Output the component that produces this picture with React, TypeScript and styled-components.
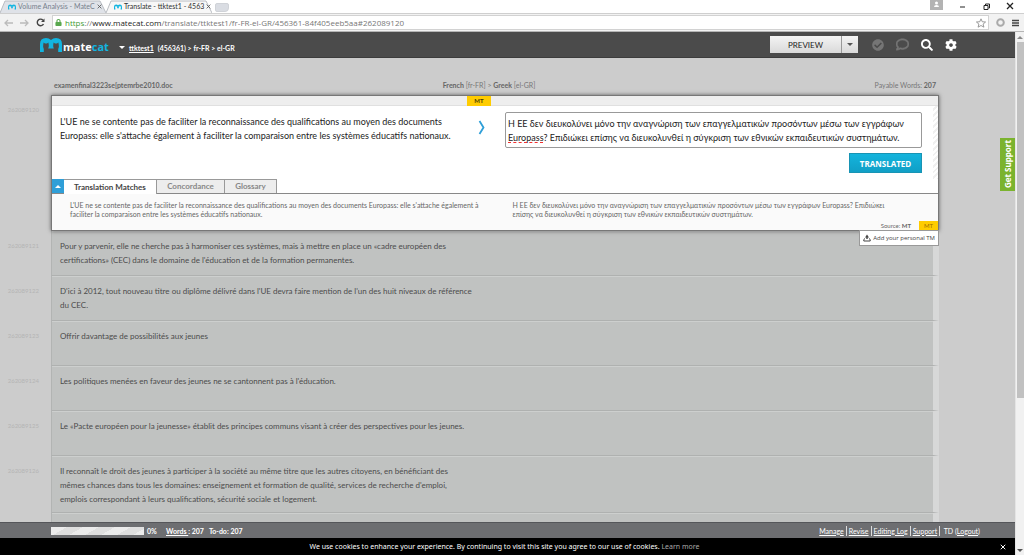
import React from "react";
import styled, { createGlobalStyle } from "styled-components";
import { FaCheckCircle, FaRegComment, FaSearch, FaCog, FaLock } from "react-icons/fa";

const GlobalStyle = createGlobalStyle`
  * { box-sizing: border-box; }
  body { margin: 0; background: #cccccc; font-family: "Lato", "Open Sans", sans-serif; color: #333; }
  button, input, textarea { font: inherit; margin: 0; border-radius: 0; }
  button { cursor: pointer; padding: 0; border: 0; background: none; color: inherit; }
  a { color: inherit; }
`;

const Shell = styled.div`
  display: flex;
  flex-direction: column;
  min-height: 100vh;
`;

/* ---------- browser chrome ---------- */

const TabStrip = styled.div`
  display: flex;
  height: 13px;
  background: #fff;
`;

const BrowserTab = styled.div<{ $active?: boolean }>`
  position: relative;
  display: flex;
  align-items: center;
  gap: 2px;
  width: 106px;
  padding: 0 4px 0 8px;
  font-size: 7px;
  line-height: 13px;
  color: ${(p) => (p.$active ? "#333" : "#777f8c")};
`;

const TabShape = styled.svg`
  position: absolute;
  inset: 0;
  width: 100%;
  height: 100%;
`;

const TabTitle = styled.span`
  position: relative;
  flex: 1;
  white-space: nowrap;
`;

const TabMark = styled.svg`
  position: relative;
  flex: none;
  width: 8px;
  height: 6px;
`;

const TabClose = styled.button`
  position: relative;
  display: flex;
  color: #555;
`;

const NewTab = styled.button`
  width: 14px;
  height: 9px;
  margin: 3px 0 0 3px;
  border: 1px solid #d0d3d8;
  background: #dadde3;
  border-radius: 2px 2px 4px 2px;
`;

const WindowButtons = styled.div`
  display: flex;
  align-items: center;
  gap: 15px;
  margin-left: auto;
  padding-right: 9px;
`;

const WindowButton = styled.button`
  display: flex;
  width: 9px;
  height: 9px;
  color: #222;
`;

const UserBadge = styled(WindowButton)`
  width: 13px;
  height: 10px;
  align-self: flex-start;
  justify-content: center;
  background: #b3b3b3;
  color: #fff;
`;

const AddressBar = styled.div`
  display: flex;
  align-items: center;
  gap: 7px;
  height: 19px;
  padding: 0 4px;
  border-top: 1px solid #cfcfcf;
  border-bottom: 1px solid #b5b5b5;
  background: #f2f2f2;
`;

const ChromeButton = styled.button`
  display: flex;
  color: #444;
  &:disabled { color: #bbb; }
`;

const UrlField = styled.div`
  display: flex;
  flex: 1;
  align-items: center;
  gap: 3px;
  height: 15px;
  padding: 0 2px;
  border: 1px solid #d2d2d2;
  background: #fff;
  font-family: "Open Sans", sans-serif;
  font-size: 8px;
  line-height: 13px;
  color: #777;
  b { font-weight: 400; color: #222; }
  i { font-style: normal; color: #3f9c35; }
`;

const UrlText = styled.a`
  flex: 1;
  text-decoration: none;
`;

/* ---------- page frame ---------- */

const Viewport = styled.div`
  display: flex;
  flex: 1;
`;

const Page = styled.div`
  position: relative;
  display: flex;
  flex: 1;
  flex-direction: column;
  min-width: 0;
  background: #cccccc;
`;

const Scrollbar = styled.div`
  display: flex;
  flex-direction: column;
  justify-content: space-between;
  align-items: center;
  width: 9px;
  padding: 4px 0 3px;
  border-left: 1px solid #e4e4e4;
  background: #f1f1f1;
`;

const Thumb = styled.div`
  flex: 0 0 69%;
  width: 7px;
  margin: 3px 0 auto;
  background: #c1c1c1;
`;

const Header = styled.header`
  display: flex;
  align-items: center;
  height: 26px;
  padding: 0 58px 0 40px;
  border-bottom: 1px solid #3c3c3c;
  background: #4b4b4b;
  color: #fff;
`;

const Logo = styled.a`
  display: flex;
  align-items: center;
  gap: 1px;
  height: 24px;
  color: #fff;
  font-family: "Open Sans", sans-serif;
  font-size: 11px;
  font-weight: 700;
  line-height: 16px;
  text-decoration: none;
  em { font-style: normal; color: #12b5e0; }
`;

const LogoText = styled.span`
  width: 48px;
  padding-top: 5px;
`;

const Crumbs = styled.nav`
  display: flex;
  align-items: center;
  gap: 4px;
  padding: 6px 0 0 8px;
  font-size: 7px;
  font-weight: 700;
  line-height: 10px;
  white-space: nowrap;
`;

const Caret = styled.span<{ $color: string; $up?: boolean }>`
  border: 3px solid transparent;
  border-top: ${(p) => (p.$up ? "0" : `3px solid ${p.$color}`)};
  border-bottom: ${(p) => (p.$up ? `3px solid ${p.$color}` : "0")};
`;

const HeaderTools = styled.div`
  display: flex;
  align-items: center;
  gap: 12px;
  margin-left: auto;
`;

const SplitButton = styled.div`
  display: flex;
  height: 17px;
  margin-right: 2px;
`;

const PreviewButton = styled.button`
  display: flex;
  align-items: center;
  justify-content: center;
  width: 71px;
  background: linear-gradient(#f4f4f4, #d9d9d9);
  color: #222;
  font-size: 8px;
`;

const PreviewMenu = styled(PreviewButton)`
  width: 17px;
  border-left: 1px solid #999;
`;

const ToolButton = styled.button<{ $dim?: boolean }>`
  display: flex;
  color: ${(p) => (p.$dim ? "#757575" : "#fff")};
`;

/* ---------- editor ---------- */

const Main = styled.main`
  display: flex;
  flex: 1;
  flex-direction: column;
`;

const FileBar = styled.div`
  display: grid;
  grid-template-columns: 1fr auto 1fr;
  padding: 22px 79px 5px 54px;
  color: #777;
  font-size: 7px;
  line-height: 10px;
  b { color: #666; }
`;

const Languages = styled.span`
  padding-right: 12px;
`;

const Payable = styled.span`
  text-align: right;
`;

const SegmentRow = styled.section<{ $last?: boolean }>`
  display: flex;
  flex: ${(p) => (p.$last ? "1" : "none")};
  padding: 0 76px 0 ${(p) => (p.$last ? "51px" : "0")};
`;

const SegmentId = styled.span`
  width: 51px;
  padding: 10px 12px 0 0;
  color: #b4b4b4;
  font-size: 6px;
  line-height: 10px;
  text-align: right;
`;

const SegmentBody = styled.div`
  flex: 1;
  min-height: 45px;
  padding: 8px 8px 6px;
  border-right: 6px solid #d7d8d8;
  border-left: 1px solid #b2b4b3;
  border-bottom: 1px solid #afb1b0;
  background: #c0c2c1;
  box-shadow: inset 0 1px #cdcfce;
  color: #4c4c4c;
  font-size: 8px;
  line-height: 14px;
  white-space: pre-line;
`;

const LastBody = styled(SegmentBody)`
  min-height: 8px;
  padding: 0;
  border-bottom: 0;
`;

const Panel = styled.div`
  position: relative;
  z-index: 1;
  flex: 1;
  min-width: 0;
  border: 1px solid #777;
  background: #fff;
  box-shadow: 0 0 4px rgba(0, 0, 0, 0.55);
`;

const PanelTop = styled.div`
  display: flex;
  justify-content: center;
  height: 10px;
  padding-right: 32px;
  border-bottom: 1px solid #e0e0e0;
  background: #eee;
`;

const MtBadge = styled.span<{ $small?: boolean }>`
  width: ${(p) => (p.$small ? "19px" : "24px")};
  height: ${(p) => (p.$small ? "9px" : "10px")};
  background: #ffcc00;
  color: ${(p) => (p.$small ? "#a06e00" : "#4a3b00")};
  font-size: 6px;
  font-weight: ${(p) => (p.$small ? "400" : "700")};
  line-height: ${(p) => (p.$small ? "9px" : "10px")};
  text-align: center;
`;

const EditArea = styled.div`
  display: grid;
  grid-template-columns: 413fr 34px 423fr 16px;
  height: 73px;
`;

const Source = styled.div`
  padding: 9px 0 0 8px;
  color: #222;
  font-size: 9px;
  line-height: 14px;
  white-space: pre-line;
`;

const CopyButton = styled.button`
  display: flex;
  align-self: start;
  justify-content: center;
  padding-top: 14px;
`;

const Target = styled.div`
  position: relative;
  display: flex;
  flex-direction: column;
  align-items: flex-end;
  gap: 5px;
  padding: 6px 0 0 6px;
`;

const TargetText = styled.textarea`
  display: block;
  width: 100%;
  height: 36px;
  padding: 4px 2px 2px;
  border: 1px solid #999;
  border-radius: 2px;
  overflow: hidden;
  resize: none;
  outline: none;
  background: #fff;
  color: #222;
  font-size: 9px;
  line-height: 14px;
`;

const Squiggle = styled.span`
  position: absolute;
  top: 36px;
  left: 9px;
  width: 35px;
  border-bottom: 1px dashed #f03030;
`;

const TranslatedButton = styled.button`
  width: 73px;
  height: 20px;
  border: 1px solid #1894b4;
  background: linear-gradient(#14b4dd, #109fc6);
  color: #fff;
  font-family: "Open Sans", sans-serif;
  font-size: 8px;
  font-weight: 700;
`;

const Hatch = styled.div`
  justify-self: end;
  width: 5px;
  background: repeating-linear-gradient(135deg, #fff 0 2px, #f0f0f0 2px 4px);
`;

const Tabs = styled.div`
  display: flex;
  height: 15px;
  border-bottom: 1px solid #888;
`;

const ToggleButton = styled.button`
  display: flex;
  align-items: center;
  justify-content: center;
  width: 12px;
  height: 14px;
  background: #2f9fd8;
`;

const TabButton = styled.button<{ $active?: boolean; $width: number }>`
  width: ${(p) => p.$width}px;
  height: ${(p) => (p.$active ? "15px" : "14px")};
  border-top: 1px solid #999;
  border-right: 1px solid #999;
  background: ${(p) => (p.$active ? "#fff" : "#ededed")};
  color: ${(p) => (p.$active ? "#444" : "#888")};
  font-size: 8px;
  font-weight: 700;
  line-height: 13px;
`;

const Matches = styled.div`
  display: grid;
  grid-template-columns: 443fr 426fr;
  padding: 7px 0 0 18px;
  background: #fafafa;
  color: #666;
  font-size: 7px;
  line-height: 9px;
  white-space: pre-line;
`;

const MatchMeta = styled.div`
  display: flex;
  justify-content: flex-end;
  gap: 8px;
  height: 11px;
  padding-top: 2px;
  background: #fafafa;
  color: #666;
  font-size: 6px;
  line-height: 9px;
`;

const AddTm = styled.button`
  position: absolute;
  top: 100%;
  right: -1px;
  display: flex;
  align-items: center;
  gap: 2px;
  height: 16px;
  padding: 0 3px;
  border: 1px solid #999;
  background: #fff;
  color: #444;
  font-family: "Open Sans", sans-serif;
  font-size: 6px;
  white-space: nowrap;
`;

const SupportTab = styled.button`
  position: absolute;
  top: 106px;
  right: 0;
  z-index: 2;
  width: 15px;
  height: 53px;
  background: #7bb32e;
  color: #fff;
  font-family: "Open Sans", sans-serif;
  font-size: 8px;
  font-weight: 700;
  line-height: 15px;
  text-align: center;
  writing-mode: vertical-rl;
  transform: rotate(180deg);
`;

/* ---------- footer ---------- */

const StatusBar = styled.footer`
  display: flex;
  align-items: center;
  gap: 5px;
  height: 16px;
  padding: 0 33px 0 51px;
  border-top: 1px solid #55565a;
  background: #6d6e71;
  color: #fff;
  font-size: 7px;
  font-weight: 700;
  line-height: 10px;
`;

const Progress = styled.div`
  width: 93px;
  height: 8px;
  background: repeating-linear-gradient(150deg, #ececec 0 8px, #dfdfdf 8px 16px);
`;

const Percent = styled.span`
  width: 14px;
  margin-left: -2px;
`;

const FooterLinks = styled.nav`
  display: flex;
  margin-left: auto;
`;

const FooterItem = styled.span<{ $last?: boolean }>`
  padding: 0 2px;
  border-right: ${(p) => (p.$last ? "0" : "1px solid #ddd")};
  font-weight: 400;
`;

const CookieBar = styled.div`
  display: flex;
  align-items: center;
  height: 17px;
  padding: 0 9px;
  background: #000;
  color: #fff;
  font-family: "Noto Sans", "Liberation Sans", sans-serif;
  font-size: 7px;
  a { color: #aaa; text-decoration: none; }
`;

const CookieText = styled.span`
  flex: 1;
  text-align: center;
`;

/* ---------- drawings ---------- */

const Mark = () => (
  <path
    d="M0 14V6Q0 0 6 0Q9 0 11 2Q13 0 16 0Q22 0 22 6V14H18.200V11Q19.300 9 18.800 7L18.400 4.500L17 5.500H15L13.600 4.500L13.200 7Q13 8.500 13.800 10.500H8.200Q9 8.500 8.800 7L8.400 4.500L7 5.500H5L3.600 4.500L3.200 7Q2.800 9 3.800 11V14Z"
    fill="#12b5e0"
  />
);

const LogoMark = () => (
  <svg width="22" height="14" viewBox="0 0 22 14" aria-hidden="true"><Mark /></svg>
);

const Cross = ({ size }: { size: number }) => (
  <svg width={size} height={size} viewBox="0 0 8 8" aria-hidden="true">
    <path d="M1 1l6 6M7 1L1 7" stroke="currentColor" strokeWidth="1.300" fill="none" />
  </svg>
);

const Arrow = ({ back }: { back?: boolean }) => (
  <svg width="9" height="8" viewBox="0 0 9 8" aria-hidden="true">
    <path d={back ? "M9 4H1M4 1L1 4l3 3" : "M0 4h8M5 1l3 3-3 3"} stroke="currentColor" strokeWidth="1.300" fill="none" />
  </svg>
);

const rows = [
  { id: "262089121", text: "Pour y parvenir, elle ne cherche pas à harmoniser ces systèmes, mais à mettre en place un «cadre européen des\ncertifications» (CEC) dans le domaine de l'éducation et de la formation permanentes." },
  { id: "262089122", text: "D'ici à 2012, tout nouveau titre ou diplôme délivré dans l'UE devra faire mention de l'un des huit niveaux de référence\ndu CEC." },
  { id: "262089123", text: "Offrir davantage de possibilités aux jeunes" },
  { id: "262089124", text: "Les politiques menées en faveur des jeunes ne se cantonnent pas à l'éducation." },
  { id: "262089125", text: "Le «Pacte européen pour la jeunesse» établit des principes communs visant à créer des perspectives pour les jeunes." },
  { id: "262089126", text: "Il reconnaît le droit des jeunes à participer à la société au même titre que les autres citoyens, en bénéficiant des\nmêmes chances dans tous les domaines: enseignement et formation de qualité, services de recherche d'emploi,\nemplois correspondant à leurs qualifications, sécurité sociale et logement." },
];

const footerLinks = ["Manage", "Revise", "Editing Log", "Support"];

const BrowserTabItem = ({ title, active }: { title: string; active?: boolean }) => (
  <BrowserTab $active={active}>
    <TabShape viewBox="0 0 106 13" preserveAspectRatio="none" aria-hidden="true">
      <path d="M0 13L5 1H100L106 13" fill={active ? "#f7f7f7" : "#dfe2e8"} stroke="#b9bcc2" />
    </TabShape>
    <TabMark viewBox="0 0 22 14" aria-hidden="true"><Mark /></TabMark>
    <TabTitle>{title}</TabTitle>
    <TabClose aria-label="Close tab"><Cross size={5} /></TabClose>
  </BrowserTab>
);

export default function App() {
  return (
    <Shell>
      <GlobalStyle />
      <TabStrip>
        <BrowserTabItem title="Volume Analysis - MateC" />
        <BrowserTabItem title="Translate - ttktest1 - 4563" active />
        <NewTab aria-label="New tab" />
        <WindowButtons>
          <UserBadge aria-label="User">
            <svg width="7" height="8" viewBox="0 0 7 8"><circle cx="3.500" cy="3" r="1.500" fill="currentColor" /><path d="M1 7q0-2 2.500-2T6 7z" fill="currentColor" /></svg>
          </UserBadge>
          <WindowButton aria-label="Minimize"><svg width="9" height="9" viewBox="0 0 9 9"><path d="M2 5h5" stroke="currentColor" /></svg></WindowButton>
          <WindowButton aria-label="Restore"><svg width="9" height="9" viewBox="0 0 9 9"><path d="M2 3.500h4v4H2zM3.500 3V2h4v4H6.500" fill="none" stroke="currentColor" /></svg></WindowButton>
          <WindowButton aria-label="Close"><Cross size={8} /></WindowButton>
        </WindowButtons>
      </TabStrip>
      <AddressBar>
        <ChromeButton disabled aria-label="Back"><Arrow back /></ChromeButton>
        <ChromeButton disabled aria-label="Forward"><Arrow /></ChromeButton>
        <ChromeButton aria-label="Reload">
          <svg width="9" height="9" viewBox="0 0 9 9"><path d="M7.500 6A3.300 3.300 0 1 1 7 2.200" fill="none" stroke="currentColor" strokeWidth="1.400" /><path d="M8.500 .5v3.600H5z" fill="currentColor" /></svg>
        </ChromeButton>
        <UrlField>
          <FaLock size={7} color="#5aa84f" />
          <UrlText href="#262089120"><i>https</i>://<b>www.matecat.com</b>/translate/ttktest1/fr-FR-el-GR/456361-84f405eeb5aa#262089120</UrlText>
          <svg width="10" height="10" viewBox="0 0 24 24" aria-hidden="true"><path d="M12 2l3 7 8 .6-6 5 2 7.400-7-4-7 4 2-7.400-6-5L9 9z" fill="none" stroke="#888" strokeWidth="2" /></svg>
        </UrlField>
        <ChromeButton aria-label="Extension">
          <svg width="9" height="9" viewBox="0 0 9 9"><circle cx="4.500" cy="4.500" r="3.300" fill="none" stroke="#aaa" strokeWidth="2" /></svg>
        </ChromeButton>
        <ChromeButton aria-label="Menu">
          <svg width="8" height="8" viewBox="0 0 8 8"><path d="M0 1.500h7M0 4h7M0 6.500h7" stroke="currentColor" strokeWidth="1.400" /></svg>
        </ChromeButton>
      </AddressBar>

      <Viewport>
        <Page>
          <Header>
            <Logo href="#home"><LogoMark /><LogoText>mate<em>cat</em></LogoText></Logo>
            <Crumbs>
              <Caret $color="#fff" />
              <a href="#project">ttktest1</a>
              <span>(456361) &gt; fr-FR &gt; el-GR</span>
            </Crumbs>
            <HeaderTools>
              <SplitButton>
                <PreviewButton>PREVIEW</PreviewButton>
                <PreviewMenu aria-label="More actions"><Caret $color="#555" /></PreviewMenu>
              </SplitButton>
              <ToolButton $dim aria-label="Check"><FaCheckCircle size={12} /></ToolButton>
              <ToolButton $dim aria-label="Comments"><FaRegComment size={13} stroke="currentColor" strokeWidth={24} /></ToolButton>
              <ToolButton aria-label="Search"><FaSearch size={12} /></ToolButton>
              <ToolButton aria-label="Settings"><FaCog size={12} /></ToolButton>
            </HeaderTools>
          </Header>

          <Main>
            <FileBar>
              <b>examenfinal3223se[ptemrbe2010.doc</b>
              <Languages><b>French</b> [fr-FR] &gt; <b>Greek</b> [el-GR]</Languages>
              <Payable>Payable Words: <b>207</b></Payable>
            </FileBar>

            <SegmentRow>
              <SegmentId>262089120</SegmentId>
              <Panel>
                <PanelTop><MtBadge>MT</MtBadge></PanelTop>
                <EditArea>
                  <Source>{"L'UE ne se contente pas de faciliter la reconnaissance des qualifications au moyen des documents\nEuropass: elle s'attache également à faciliter la comparaison entre les systèmes éducatifs nationaux."}</Source>
                  <CopyButton aria-label="Copy source">
                    <svg width="8" height="15" viewBox="0 0 8 15"><path d="M1.500 1l4 6.500-4 6.500" fill="none" stroke="#2f9fd8" strokeWidth="1.800" /></svg>
                  </CopyButton>
                  <Target>
                    <TargetText
                      aria-label="Translation"
                      spellCheck={false}
                      defaultValue={"Η ΕΕ δεν διευκολύνει μόνο την αναγνώριση των επαγγελματικών προσόντων μέσω των εγγράφων\nEuropass? Επιδιώκει επίσης να διευκολυνθεί η σύγκριση των εθνικών εκπαιδευτικών συστημάτων."}
                    />
                    <Squiggle />
                    <TranslatedButton>TRANSLATED</TranslatedButton>
                  </Target>
                  <Hatch />
                </EditArea>
                <Tabs>
                  <ToggleButton aria-label="Collapse"><Caret $up $color="#fff" /></ToggleButton>
                  <TabButton $active $width={93}>Translation Matches</TabButton>
                  <TabButton $width={68}>Concordance</TabButton>
                  <TabButton $width={52}>Glossary</TabButton>
                </Tabs>
                <Matches>
                  <span>{"L'UE ne se contente pas de faciliter la reconnaissance des qualifications au moyen des documents Europass: elle s'attache également à\nfaciliter la comparaison entre les systèmes éducatifs nationaux."}</span>
                  <span>{"Η ΕΕ δεν διευκολύνει μόνο την αναγνώριση των επαγγελματικών προσόντων μέσω των εγγράφων Europass? Επιδιώκει\nεπίσης να διευκολυνθεί η σύγκριση των εθνικών εκπαιδευτικών συστημάτων."}</span>
                </Matches>
                <MatchMeta><span>Source: <b>MT</b></span><MtBadge $small>MT</MtBadge></MatchMeta>
                <AddTm>
                  <svg width="8" height="8" viewBox="0 0 8 8" aria-hidden="true"><path d="M4 .5L6 3.500H4.700V5H3.300V3.500H2z" fill="#444" /><path d="M2 4.500L.8 5.500v1.500h6.400V5.500L6 4.500" fill="none" stroke="#444" /></svg>
                  Add your personal TM
                </AddTm>
              </Panel>
            </SegmentRow>

            {rows.map((row) => (
              <SegmentRow key={row.id}>
                <SegmentId>{row.id}</SegmentId>
                <SegmentBody>{row.text}</SegmentBody>
              </SegmentRow>
            ))}
            <SegmentRow $last>
              <LastBody />
            </SegmentRow>
          </Main>

          <StatusBar>
            <Progress />
            <Percent>0%</Percent>
            <span><a href="#words">Words </a>: 207</span>
            <span>To-do: 207</span>
            <FooterLinks>
              {footerLinks.map((label) => (
                <FooterItem key={label}><a href={`#${label}`}>{label}</a></FooterItem>
              ))}
              <FooterItem $last>&nbsp;TD <a href="#logout">(Logout)</a></FooterItem>
            </FooterLinks>
          </StatusBar>
          <CookieBar>
            <CookieText>We use cookies to enhance your experience. By continuing to visit this site you agree to our use of cookies. <a href="#more">Learn more</a></CookieText>
            <ToolButton aria-label="Dismiss"><Cross size={6} /></ToolButton>
          </CookieBar>
          <SupportTab>Get Support</SupportTab>
        </Page>
        <Scrollbar>
          <Caret $up $color="#888" />
          <Thumb />
          <Caret $color="#555" />
        </Scrollbar>
      </Viewport>
    </Shell>
  );
}
